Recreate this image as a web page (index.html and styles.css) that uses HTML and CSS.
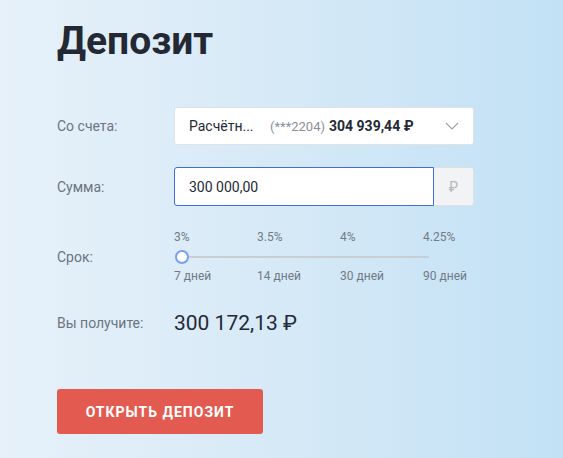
FILE: index.html
```html
<!DOCTYPE html>
<html lang="ru">
<head>
  <meta charset="UTF-8">
  <meta name="viewport" content="width=device-width, initial-scale=1.0">
  <title>Депозит</title>
  <link rel="stylesheet" href="styles.css">
</head>
<body>
  <div class="page">
    <h1 class="title">Депозит</h1>

    <div class="form">
      <div class="row row-account">
        <div class="label">Со счета:</div>
        <div class="select">
          <span class="acc-name">Расчётн...</span>
          <span class="acc-num">(***2204)</span>
          <span class="acc-sum">304 939,44 ₽</span>
          <svg class="chevron" width="14" height="8" viewBox="0 0 14 8">
            <path d="M1 1 L7 7 L13 1" fill="none" stroke="#9aa0a6" stroke-width="1.1"/>
          </svg>
        </div>
      </div>

      <div class="row row-amount">
        <div class="label">Сумма:</div>
        <div class="amount">
          <input type="text" class="amount-input" value="300 000,00">
          <div class="currency">₽</div>
        </div>
      </div>

      <div class="row row-term">
        <div class="label">Срок:</div>
        <div class="slider">
          <div class="ticks">
            <span>3%</span>
            <span>3.5%</span>
            <span>4%</span>
            <span>4.25%</span>
          </div>
          <div class="track">
            <div class="thumb"></div>
          </div>
          <div class="ticks">
            <span>7 дней</span>
            <span>14 дней</span>
            <span>30 дней</span>
            <span>90 дней</span>
          </div>
        </div>
      </div>

      <div class="row row-result">
        <div class="label">Вы получите:</div>
        <div class="result">300 172,13 ₽</div>
      </div>
    </div>

    <button class="open-btn">Открыть депозит</button>
  </div>
</body>
</html>
```

FILE: styles.css
```css
html, body {
  margin: 0;
  height: 100%;
}
body {
  font-family: Roboto, "Liberation Sans", Arial, sans-serif;
  background: linear-gradient(90deg, #e6f1fa 0%, #d8eaf7 45%, #c2e1f5 100%);
  color: #232a35;
  overflow: hidden;
}
.page {
  padding: 17px 0 0 57px;
}
.title {
  margin: 0;
  font-size: 39px;
  font-weight: 700;
  line-height: 48px;
  color: #232832;
}
.form {
  margin-top: 42px;
  display: flex;
  flex-direction: column;
}
.row {
  display: grid;
  grid-template-columns: 117px 300px;
  align-items: center;
}
.label {
  font-size: 14px;
  color: #6c7480;
}
.row-amount {
  margin-top: 22px;
}
.row-term {
  margin-top: 24px;
}
.row-result {
  margin-top: 28px;
}
.select {
  height: 38px;
  box-sizing: border-box;
  background: #fff;
  border: 1px solid #dde3e8;
  border-radius: 3px;
  display: flex;
  align-items: center;
  padding: 0 14px 0 14px;
  font-size: 14px;
}
.acc-name {
  color: #232a35;
  width: 81px;
}
.acc-num {
  color: #8a9099;
  font-size: 13px;
  margin-right: 4px;
}
.acc-sum {
  font-weight: 700;
  color: #232a35;
}
.chevron {
  margin-left: auto;
}
.amount {
  display: flex;
  height: 39px;
}
.amount-input {
  width: 260px;
  box-sizing: border-box;
  border: 1px solid #3d6fd6;
  border-radius: 3px 0 0 3px;
  padding: 0 14px;
  font-family: inherit;
  font-size: 14px;
  color: #232a35;
  outline: none;
  background: #fff;
}
.currency {
  width: 40px;
  box-sizing: border-box;
  border: 1px solid #dde1e5;
  border-left: none;
  border-radius: 0 3px 3px 0;
  background: #f2f3f4;
  color: #b5b9be;
  font-size: 14px;
  display: flex;
  align-items: center;
  justify-content: center;
}
.slider {
  display: flex;
  flex-direction: column;
}
.ticks {
  display: grid;
  grid-template-columns: 83px 83px 83px auto;
  font-size: 12px;
  color: #727a85;
  line-height: 14px;
}
.track {
  position: relative;
  margin: 12px 0 11px 8px;
  width: 247px;
  height: 2px;
  background: #c9ced3;
}
.thumb {
  position: absolute;
  left: -7px;
  top: -6px;
  width: 10px;
  height: 10px;
  border: 2px solid #7a9ff0;
  border-radius: 50%;
  background: #fff;
}
.result {
  font-size: 21px;
  color: #232a35;
}
.open-btn {
  margin-top: 54px;
  width: 206px;
  height: 45px;
  border: none;
  border-radius: 3px;
  background: #e35b50;
  color: #fff;
  font-family: inherit;
  font-size: 14px;
  font-weight: 700;
  letter-spacing: 1px;
  text-transform: uppercase;
  cursor: pointer;
}
```
